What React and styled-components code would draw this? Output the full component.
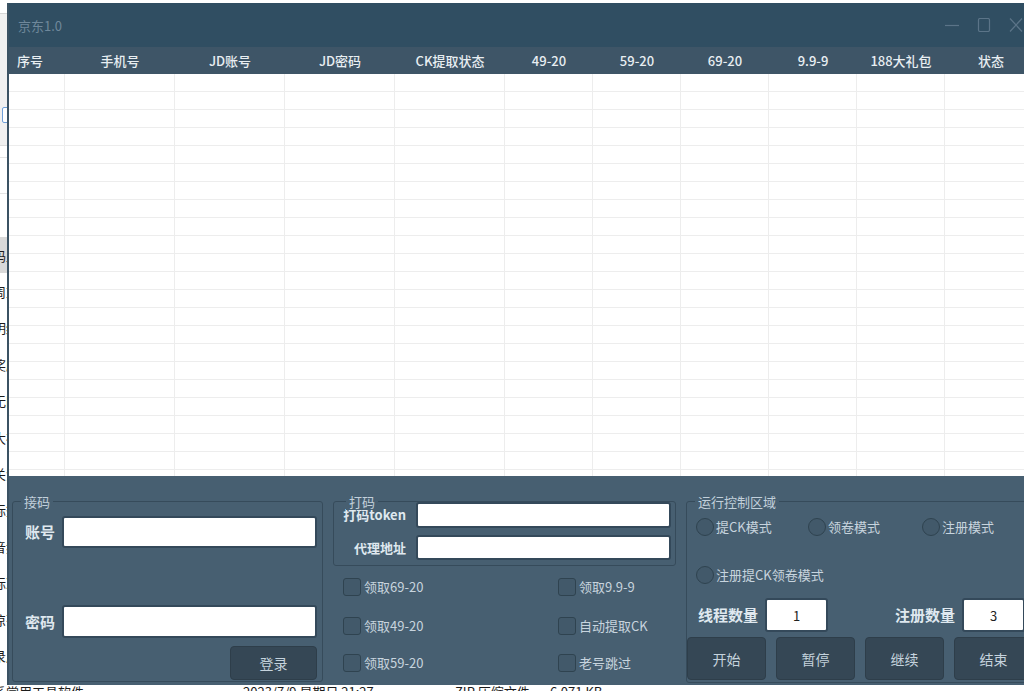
import styled, { createGlobalStyle } from "styled-components";

const FONT = `"Noto Sans CJK SC", "Noto Sans", sans-serif`;

const GlobalStyle = createGlobalStyle`
  html, body { margin: 0; padding: 0; }
  body {
    width: 1024px;
    height: 691px;
    overflow: hidden;
    font-family: ${FONT};
  }
  * { box-sizing: border-box; }
`;

const COLUMNS = "56px 110px 110px 110px 110px 88px 88px 88px 88px 88px 92px";
const HEADERS = ["序号", "手机号", "JD账号", "JD密码", "CK提取状态", "49-20", "59-20", "69-20", "9.9-9", "188大礼包", "状态"];

const FILES = [
  { name: "码上抢券助手", selected: true },
  { name: "周末签到工具" },
  { name: "明细导出" },
  { name: "奖励领取记录" },
  { name: "无限代理池" },
  { name: "大礼包脚本" },
  { name: "关注店铺" },
  { name: "标签管理" },
  { name: "音频素材" },
  { name: "标准版本" },
  { name: "凉茶数据" },
  { name: "录屏工具" },
  { name: "系常用工具软件", date: "2023/7/9 星期日 21:27", type: "ZIP 压缩文件", size: "6,071 KB" },
];

/* ---------- desktop + the explorer window behind ---------- */

const Desktop = styled.div`
  position: relative;
  width: 1024px;
  height: 691px;
  overflow: hidden;
  background: #fff;
`;

const Explorer = styled.div`
  position: absolute;
  inset: 0;
  display: flex;
  flex-direction: column;
  background: #fff;
  font-size: 13px;
  color: #1b1b1b;
`;

const ExplorerTop = styled.div`
  flex: none;
  height: 14px;
  border-bottom: 1px solid #d6d6d6;
`;

const ExplorerRibbon = styled.div`
  flex: none;
  height: 132px;
  padding-top: 93px;
  background: #f0f0f0;
  border-bottom: 1px solid #dcdcdc;
`;

const RibbonIcon = styled.span`
  display: block;
  margin-left: 2px;
  width: 10px;
  height: 16px;
  border: 1px solid #6f9fd8;
  border-radius: 2px;
  background: #fff;
`;

const ExplorerHead = styled.div`
  flex: none;
  height: 91px;
`;

const HeadLine = styled.div`
  height: ${(p) => p.$h}px;
  border-bottom: 1px solid #e4e4e4;
`;

const FileRow = styled.div`
  flex: none;
  height: 36.4px;
  display: grid;
  grid-template-columns: 243px 212px 95px 80px;
  align-items: center;
  background: ${(p) => (p.$selected ? "#d9d9d9" : "transparent")};
  white-space: nowrap;
  line-height: 19px;
`;

const FileName = styled.span`
  text-indent: -7px;
  overflow: hidden;
`;

/* ---------- the app window ---------- */

const AppWindow = styled.div`
  position: absolute;
  left: 7px;
  top: 3px;
  width: 1030px;
  height: 682px;
  display: flex;
  flex-direction: column;
  border-left: 2px solid #3b5263;
  background: #475f71;
  font-family: ${FONT};
`;

const TitleBar = styled.div`
  flex: none;
  height: 44px;
  display: flex;
  align-items: center;
  padding: 0 14px 0 9px;
  background: #304e62;
`;

const Title = styled.span`
  font-size: 13px;
  color: #6f889b;
`;

const WindowControls = styled.div`
  margin-left: auto;
  display: flex;
  align-items: center;
  gap: 18px;
  color: #5b7488;
`;

const HeaderRow = styled.div`
  flex: none;
  height: 27px;
  display: grid;
  grid-template-columns: ${COLUMNS};
  align-items: center;
  background: #3e5567;
`;

const HeaderCell = styled.div`
  font-size: 13px;
  font-weight: 500;
  color: #e8eef2;
  white-space: nowrap;
  text-align: ${(p) => (p.$left ? "left" : "center")};
  padding-left: ${(p) => (p.$left ? "8px" : "0")};
`;

const TableBody = styled.div`
  flex: none;
  height: 402px;
  overflow: hidden;
  background: #fff;
`;

const BodyRow = styled.div`
  height: 18px;
  display: grid;
  grid-template-columns: ${COLUMNS};
  border-bottom: 1px solid #ededed;
`;

const BodyCell = styled.div`
  border-right: 1px solid #ededed;
`;

const Panel = styled.div`
  flex: 1;
  display: grid;
  grid-template-columns: 311px 343px 350px;
  column-gap: 10px;
  align-items: start;
  padding: 25px 2px 0 3px;
  background: #475f71;
`;

const GroupBox = styled.div`
  position: relative;
  border: 1px solid #364b5b;
  border-radius: 3px;
`;

const GroupTitle = styled.span`
  position: absolute;
  top: -9px;
  left: ${(p) => p.$left ?? 8}px;
  padding: 0 3px;
  background: #475f71;
  font-size: 13px;
  line-height: 17px;
  color: #c2d0db;
  white-space: nowrap;
`;

const LoginGroup = styled(GroupBox)`
  padding: 14px 5px 1px 12px;
`;

const FieldRow = styled.div`
  display: flex;
  align-items: center;
  gap: ${(p) => p.$gap ?? 7}px;
  margin-top: ${(p) => p.$mt ?? 0}px;
`;

const BigLabel = styled.span`
  flex: none;
  width: ${(p) => p.$w ?? 30}px;
  font-size: 15px;
  font-weight: 700;
  line-height: 20px;
  color: #dfe8ef;
  white-space: nowrap;
`;

const SmallLabel = styled.span`
  flex: none;
  width: 65px;
  text-align: right;
  font-size: 13px;
  font-weight: 700;
  line-height: 18px;
  color: #dfe8ef;
  white-space: nowrap;
`;

const TextInput = styled.input`
  flex: ${(p) => (p.$w ? "none" : "1")};
  width: ${(p) => (p.$w ? `${p.$w}px` : "auto")};
  min-width: 0;
  height: ${(p) => p.$h}px;
  padding: 0 6px;
  border: 2px solid #34495a;
  border-radius: 3px;
  background: #fff;
  outline: none;
  font: 13px ${FONT};
  color: #222;
  text-align: ${(p) => (p.$center ? "center" : "left")};
`;

const ButtonRow = styled.div`
  display: flex;
  justify-content: ${(p) => (p.$end ? "flex-end" : "flex-start")};
  gap: 10px;
  margin-top: ${(p) => p.$mt}px;
`;

const PanelButton = styled.button`
  flex: none;
  width: ${(p) => p.$w}px;
  height: ${(p) => p.$h}px;
  padding: 0;
  border: 1px solid #2e3e4a;
  border-radius: 4px;
  background: #354755;
  color: #c5d3dd;
  font: 14px ${FONT};
  cursor: pointer;
`;

const CodeColumn = styled.div`
  display: flex;
  flex-direction: column;
`;

const CodeGroup = styled(GroupBox)`
  display: flex;
  flex-direction: column;
  gap: 7px;
  padding: 0 4px 5px 7px;
`;

const CheckGrid = styled.div`
  display: grid;
  grid-template-columns: 215px auto;
  grid-template-rows: 36px 41px 33px;
  align-items: center;
  margin-top: 3px;
  padding-left: 10px;
`;

const OptionItem = styled.label`
  display: flex;
  align-items: center;
  gap: ${(p) => p.$gap ?? 3}px;
  font-size: 13px;
  line-height: 18px;
  color: #c7d4de;
  white-space: nowrap;
`;

const CheckBox = styled.span`
  flex: none;
  width: 18px;
  height: 18px;
  border: 1px solid #2f4350;
  border-radius: 3px;
  background: #42596a;
`;

const RadioDot = styled.span`
  flex: none;
  width: 18px;
  height: 18px;
  border: 1px solid #2f4350;
  border-radius: 50%;
  background: #42596a;
`;

const ControlGroup = styled(GroupBox)`
  padding: 16px 0 2px 0;
`;

const RadioRow = styled.div`
  display: grid;
  grid-template-columns: 112px 114px auto;
  margin: ${(p) => p.$mt ?? 0}px 0 0 9px;
`;

const NumberRow = styled.div`
  display: flex;
  align-items: center;
  justify-content: space-between;
  margin-top: 14px;
  padding: 0 10px 0 11px;
`;

const NumberField = styled.div`
  display: flex;
  align-items: center;
  gap: 7px;
`;

const Icon = styled.svg`
  display: block;
  flex: none;
`;

const MinIcon = () => (
  <Icon width="14" height="14" viewBox="0 0 14 14">
    <path d="M0 7.5h14" stroke="currentColor" strokeWidth="1.2" />
  </Icon>
);

const MaxIcon = () => (
  <Icon width="14" height="14" viewBox="0 0 14 14">
    <rect x="1.5" y="0.5" width="11" height="13" rx="1.5" fill="none" stroke="currentColor" strokeWidth="1.2" />
  </Icon>
);

const CloseIcon = () => (
  <Icon width="14" height="14" viewBox="0 0 14 14">
    <path d="M1 0.5l12 13M13 0.5l-12 13" stroke="currentColor" strokeWidth="1.2" />
  </Icon>
);

const Check = ({ children }) => (
  <OptionItem>
    <CheckBox />
    {children}
  </OptionItem>
);

const Radio = ({ children }) => (
  <OptionItem $gap={2}>
    <RadioDot />
    {children}
  </OptionItem>
);

export default function App() {
  return (
    <Desktop>
      <GlobalStyle />
      <Explorer>
        <ExplorerTop />
        <ExplorerRibbon>
          <RibbonIcon />
        </ExplorerRibbon>
        <ExplorerHead>
          <HeadLine $h={12} />
          <HeadLine $h={36} />
        </ExplorerHead>
        {FILES.map((f) => (
          <FileRow key={f.name} $selected={f.selected}>
            <FileName>{f.name}</FileName>
            <span>{f.date}</span>
            <span>{f.type}</span>
            <span>{f.size}</span>
          </FileRow>
        ))}
      </Explorer>

      <AppWindow>
        <TitleBar>
          <Title>京东1.0</Title>
          <WindowControls>
            <MinIcon />
            <MaxIcon />
            <CloseIcon />
          </WindowControls>
        </TitleBar>

        <HeaderRow>
          {HEADERS.map((h, i) => (
            <HeaderCell key={h} $left={i === 0}>
              {h}
            </HeaderCell>
          ))}
        </HeaderRow>

        <TableBody>
          {Array.from({ length: 23 }, (_, r) => (
            <BodyRow key={r}>
              {HEADERS.map((h) => (
                <BodyCell key={h} />
              ))}
            </BodyRow>
          ))}
        </TableBody>

        <Panel>
          <LoginGroup>
            <GroupTitle>接码</GroupTitle>
            <FieldRow>
              <BigLabel>账号</BigLabel>
              <TextInput $h={32} />
            </FieldRow>
            <FieldRow $mt={57}>
              <BigLabel>密码</BigLabel>
              <TextInput $h={33} type="password" />
            </FieldRow>
            <ButtonRow $end $mt={8}>
              <PanelButton $w={87} $h={34}>登录</PanelButton>
            </ButtonRow>
          </LoginGroup>

          <CodeColumn>
            <CodeGroup>
              <GroupTitle $left={12}>打码</GroupTitle>
              <FieldRow $gap={10}>
                <SmallLabel>打码token</SmallLabel>
                <TextInput $h={26} />
              </FieldRow>
              <FieldRow $gap={10}>
                <SmallLabel>代理地址</SmallLabel>
                <TextInput $h={25} />
              </FieldRow>
            </CodeGroup>
            <CheckGrid>
              <Check>领取69-20</Check>
              <Check>领取9.9-9</Check>
              <Check>领取49-20</Check>
              <Check>自动提取CK</Check>
              <Check>领取59-20</Check>
              <Check>老号跳过</Check>
            </CheckGrid>
          </CodeColumn>

          <ControlGroup>
            <GroupTitle>运行控制区域</GroupTitle>
            <RadioRow>
              <Radio>提CK模式</Radio>
              <Radio>领卷模式</Radio>
              <Radio>注册模式</Radio>
            </RadioRow>
            <RadioRow $mt={30}>
              <Radio>注册提CK领卷模式</Radio>
            </RadioRow>
            <NumberRow>
              <NumberField>
                <BigLabel $w={60}>线程数量</BigLabel>
                <TextInput $h={34} $w={63} $center defaultValue="1" />
              </NumberField>
              <NumberField>
                <BigLabel $w={60}>注册数量</BigLabel>
                <TextInput $h={34} $w={63} $center defaultValue="3" />
              </NumberField>
            </NumberRow>
            <ButtonRow $mt={5}>
              <PanelButton $w={79} $h={43}>开始</PanelButton>
              <PanelButton $w={79} $h={43}>暂停</PanelButton>
              <PanelButton $w={79} $h={43}>继续</PanelButton>
              <PanelButton $w={79} $h={43}>结束</PanelButton>
            </ButtonRow>
          </ControlGroup>
        </Panel>
      </AppWindow>
    </Desktop>
  );
}
